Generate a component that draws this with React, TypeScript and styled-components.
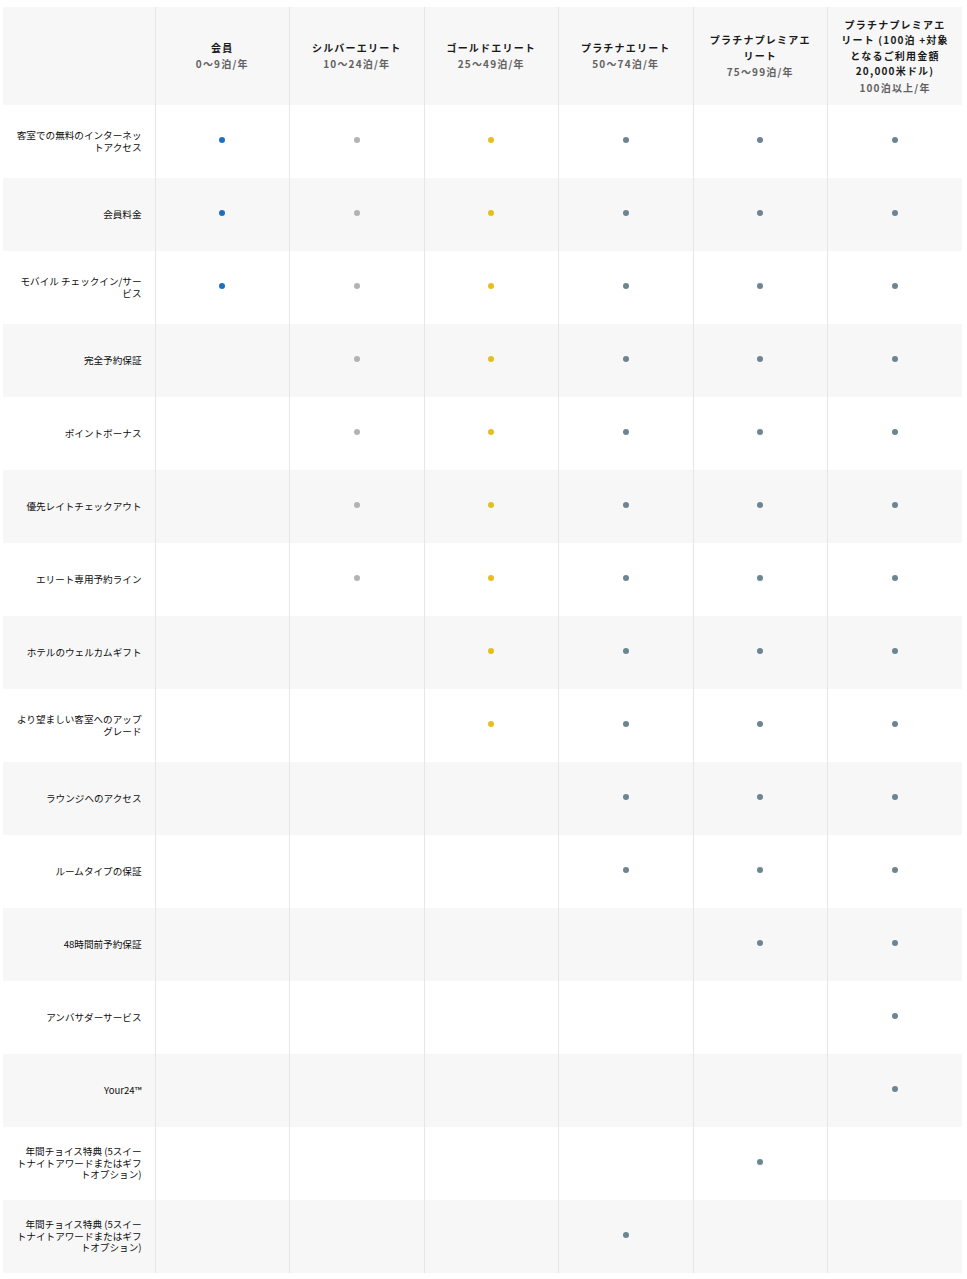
import React from 'react';
import styled, { createGlobalStyle } from 'styled-components';

const GlobalStyle = createGlobalStyle`
   html, body {
      margin: 0;
      padding: 0;
      background: #fff;
   }
   body {
      font-family: "Noto Sans CJK JP", "Noto Sans", sans-serif;
      color: #111;
   }
`;

const Page = styled.div`
   padding: 7px 5px 0 3px;
`;

const Table = styled.table`
   width: 959px;
   table-layout: fixed;
   border-collapse: collapse;
`;

const LabelCol = styled.col`
   width: 152px;
`;

const HeadRow = styled.tr`
   height: 98px;
   background: #f7f7f7;
`;

const Row = styled.tr`
   height: 73px;
   background: #fff;

   &:nth-child(even) {
      background: #f7f7f7;
   }
`;

const HeadCell = styled.th`
   padding: 0 12px;
   border-left: 1px solid #e6e6e6;
   text-align: center;
   vertical-align: middle;
   font-weight: 700;
`;

const HeadTitle = styled.div`
   font-size: 10px;
   line-height: 15.5px;
   letter-spacing: 1.2px;
   color: #1a1a1a;
   white-space: pre-line;
`;

const HeadSub = styled.div`
   margin-top: 1px;
   font-size: 10px;
   line-height: 16px;
   letter-spacing: 1.2px;
   color: #626262;
`;

const LabelCell = styled.td`
   padding: 0 13px 0 12px;
   text-align: right;
   vertical-align: middle;
   font-size: 9.6px;
   line-height: 11.5px;
   color: #0d0d0d;
   white-space: pre-line;
`;

const Cell = styled.td`
   padding: 0;
   border-left: 1px solid #e6e6e6;
   vertical-align: middle;
`;

const Dot = styled.span<{ $color: string }>`
   display: block;
   width: 6px;
   height: 6px;
   margin: 0 auto 3px;
   border-radius: 50%;
   background: ${p => p.$color};
`;

interface Tier {
   name: string;
   nights: string;
   color: string;
}

const tiers: Tier[] = [
   { name: '会員', nights: '0〜9泊/年', color: '#1f6fbf' },
   { name: 'シルバーエリート', nights: '10〜24泊/年', color: '#b3b3b3' },
   { name: 'ゴールドエリート', nights: '25〜49泊/年', color: '#e6bf1e' },
   { name: 'プラチナエリート', nights: '50〜74泊/年', color: '#6c8591' },
   { name: 'プラチナプレミアエ\nリート', nights: '75〜99泊/年', color: '#6c8591' },
   {
      name: 'プラチナプレミアエ\nリート (100泊 +対象\nとなるご利用金額\n20,000米ドル)',
      nights: '100泊以上/年',
      color: '#6c8591',
   },
];

const choice = '年間チョイス特典 (5スイー\nトナイトアワードまたはギフ\nトオプション)';

const benefits: [string, number[]][] = [
   ['客室での無料のインターネットアクセス', [0, 1, 2, 3, 4, 5]],
   ['会員料金', [0, 1, 2, 3, 4, 5]],
   ['モバイル チェックイン/サービス', [0, 1, 2, 3, 4, 5]],
   ['完全予約保証', [1, 2, 3, 4, 5]],
   ['ポイントボーナス', [1, 2, 3, 4, 5]],
   ['優先レイトチェックアウト', [1, 2, 3, 4, 5]],
   ['エリート専用予約ライン', [1, 2, 3, 4, 5]],
   ['ホテルのウェルカムギフト', [2, 3, 4, 5]],
   ['より望ましい客室へのアップグレード', [2, 3, 4, 5]],
   ['ラウンジへのアクセス', [3, 4, 5]],
   ['ルームタイプの保証', [3, 4, 5]],
   ['48時間前予約保証', [4, 5]],
   ['アンバサダーサービス', [5]],
   ['Your24™', [5]],
   [choice, [4]],
   [choice, [3]],
];

export default function App() {
   return (
      <Page>
         <GlobalStyle />
         <Table>
            <colgroup>
               <LabelCol />
               {tiers.map(t => (
                  <col key={t.name} />
               ))}
            </colgroup>
            <thead>
               <HeadRow>
                  <LabelCell />
                  {tiers.map(t => (
                     <HeadCell key={t.name}>
                        <HeadTitle>{t.name}</HeadTitle>
                        <HeadSub>{t.nights}</HeadSub>
                     </HeadCell>
                  ))}
               </HeadRow>
            </thead>
            <tbody>
               {benefits.map(([label, has], i) => (
                  <Row key={i}>
                     <LabelCell>{label}</LabelCell>
                     {tiers.map((t, j) => (
                        <Cell key={j}>{has.includes(j) && <Dot $color={t.color} />}</Cell>
                     ))}
                  </Row>
               ))}
            </tbody>
         </Table>
      </Page>
   );
}
